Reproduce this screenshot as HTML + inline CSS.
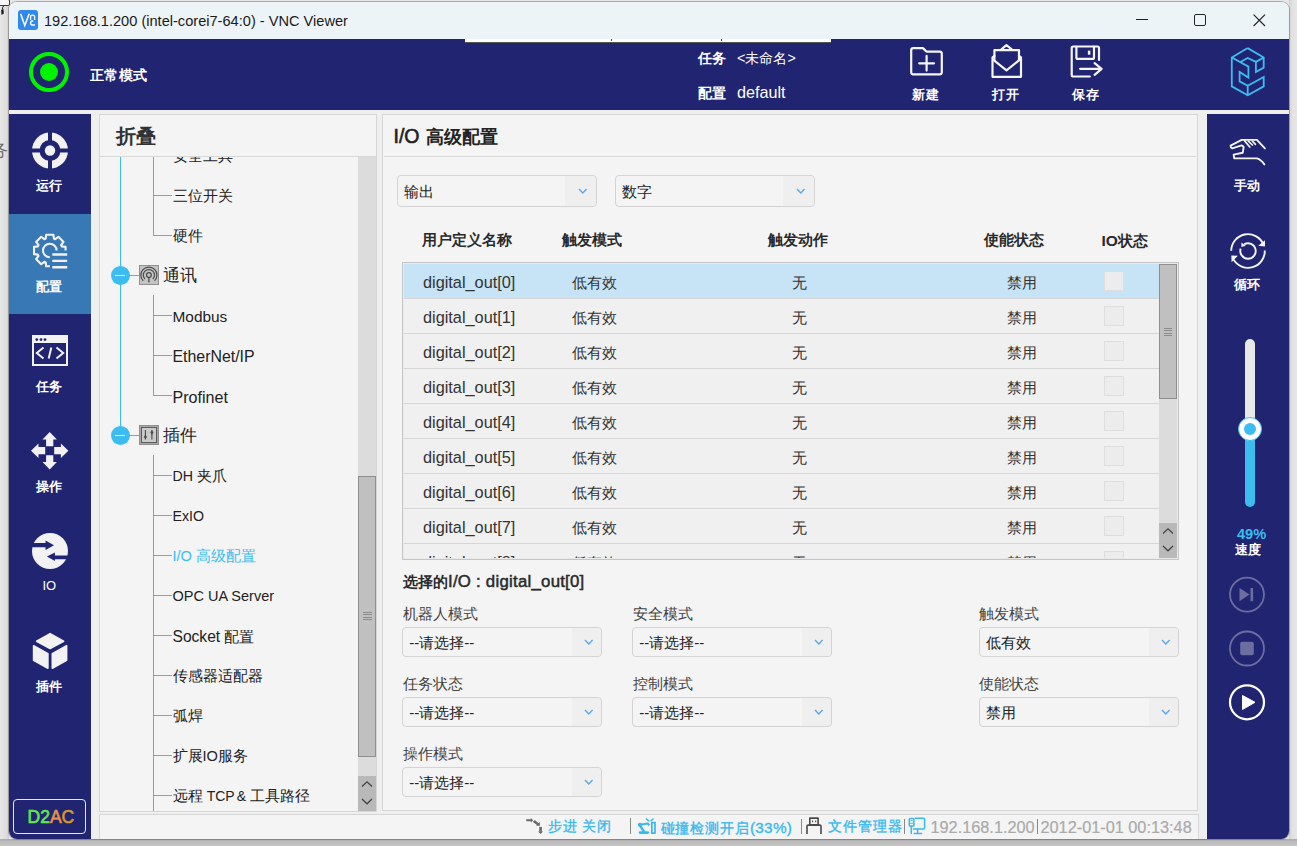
<!DOCTYPE html><html><head><meta charset="utf-8"><style>
*{box-sizing:border-box;margin:0;padding:0}
svg{display:block}
html,body{width:1297px;height:846px;overflow:hidden}
body{position:relative;background:#e6e6e6;font-family:"Liberation Sans",sans-serif;color:#333}
.a{position:absolute}
.t{position:absolute;white-space:nowrap;line-height:1}
.w{color:#fff;font-weight:bold}
.L{font-size:16.4px}
.panel{position:absolute;background:#f4f4f4;border:1px solid #d6d6d6}
.sel{position:absolute;border:1px solid #d3d3d3;border-radius:4px;background:#f4f4f4}
.sel .dd{position:absolute;right:0;top:0;bottom:0;width:30px;background:#efefef;border-radius:0 4px 4px 0}
.sel .dd svg{position:absolute;left:11px;top:12px}
.sel .tx{position:absolute;left:6.2px;top:7px;font-size:15px;line-height:15px;white-space:nowrap;color:#222}
.lbl{position:absolute;font-size:15px;line-height:15px;color:#444;white-space:nowrap}
</style></head><body>
<div class="a" style="left:1289px;top:0;width:8px;height:839px;background:linear-gradient(90deg,#cfcfcf,#e2e2e2 40%,#e6e6e6)"></div>
<div class="a" style="left:0;top:0;width:9px;height:846px;background:linear-gradient(90deg,#e6e6e6,#dedede 70%,#c9c9c9)"></div>
<div class="a" style="left:-3px;top:-1px;width:13px;height:7px;background:#f8f8f8;border:1.3px solid #3a3a3a;border-radius:0 2px 2px 0"></div>
<svg class="a" style="left:0;top:5px" width="9" height="12" viewBox="0 0 9 12"><path d="M3.8 0.8 Q2.4 2 2.4 4" fill="none" stroke="#222" stroke-width="1"/><path d="M1.2 5 L3.4 3.8 L3.8 8.4 L1.5 10 Z" fill="#1a1a1a"/></svg>
<div class="a" style="left:0;top:839px;width:1297px;height:7px;background:linear-gradient(#a9a9a9,#bdbdbd 40%,#c4c4c4)"></div>
<div class="t" style="left:-9px;top:142px;font-size:17px;color:#666">务</div>
<div class="a" style="left:9px;top:2px;width:1280px;height:837px;background:#efefef;border-radius:8px 8px 8px 8px;overflow:hidden;box-shadow:0 0 0 1px rgba(60,60,60,0.35)">
<div class="a" style="left:0;top:0;width:1280px;height:37px;background:#edf4f8"></div>
</div>
<div class="a" style="left:18px;top:10px;width:20px;height:20px;background:#3189ea;border-radius:3px"></div>
<svg class="a" style="left:18px;top:10px" width="20" height="20" viewBox="0 0 20 20"><path d="M2.6 3.8 L6.8 15.5 L11.2 3.8" fill="none" stroke="#fff" stroke-width="1.5" stroke-linejoin="miter"/><path d="M12.6 10 V6.6 Q12.6 5.2 14.6 5.2 Q16.6 5.2 16.6 6.6 V10" fill="none" stroke="#fff" stroke-width="1.3"/><path d="M17 15 H14.4 Q12.6 15 12.6 13 Q12.6 11 14.4 11 H15.2" fill="none" stroke="#fff" stroke-width="1.3"/></svg>
<div class="t" style="left:44px;top:14px;font-size:14.6px;color:#1a1a1a">192.168.1.200 (intel-corei7-64:0) - VNC Viewer</div>
<div class="a" style="left:1136px;top:19px;width:12px;height:1px;background:#222"></div>
<div class="a" style="left:1194px;top:14px;width:12px;height:12px;border:1.2px solid #222;border-radius:2px"></div>
<svg class="a" style="left:1253px;top:13.5px" width="13" height="13" viewBox="0 0 13 13"><path d="M0.6 0.6 L12 12 M12 0.6 L0.6 12" stroke="#222" stroke-width="1.15"/></svg>
<div class="a" style="left:9px;top:39px;width:1280px;height:71px;background:#212471"></div>
<div class="a" style="left:465px;top:39px;width:366px;height:4px;background:#fff;border-bottom:1px solid #555"></div>
<div class="a" style="left:611px;top:39px;width:1px;height:2px;background:#555"></div>
<div class="a" style="left:721px;top:39px;width:1px;height:2px;background:#555"></div>
<div class="a" style="left:29px;top:52px;width:40px;height:40px;border:4px solid #00f400;border-radius:50%"></div>
<div class="a" style="left:40px;top:63px;width:18px;height:18px;background:#00f400;border-radius:50%"></div>
<div class="t w" style="left:89.5px;top:67.5px;font-size:14.2px;letter-spacing:0.6px">正常模式</div>
<div class="t w" style="left:697.5px;top:50.5px;font-size:14px;letter-spacing:0.3px">任务</div>
<div class="t" style="left:737px;top:50.5px;font-size:14.4px;color:#fff">&lt;未命名&gt;</div>
<div class="t w" style="left:697.5px;top:85.5px;font-size:14px;letter-spacing:0.3px">配置</div>
<div class="t" style="left:737px;top:84px;font-size:16.2px;color:#fff">default</div>
<svg class="a" style="left:905px;top:43px" width="42" height="36" viewBox="0 0 42 36"><path d="M8.2 5.2 H17.6 Q18.1 5.2 18.5 5.6 L21.1 8.3 Q21.5 8.7 22 8.7 H34.8 Q36.8 8.7 36.8 10.7 V29.3 Q36.8 31.3 34.8 31.3 H8.2 Q6.2 31.3 6.2 29.3 V7.2 Q6.2 5.2 8.2 5.2 Z" fill="none" stroke="#f6f6f6" stroke-width="2.2" stroke-linejoin="round" stroke-linecap="round"/><path d="M21.6 12.9 V27.6 M14.2 20.3 H29" fill="none" stroke="#f6f6f6" stroke-width="2.2" stroke-linejoin="round" stroke-linecap="round"/></svg>
<svg class="a" style="left:985px;top:43px" width="42" height="36" viewBox="0 0 42 36"><path d="M9.4 17 V7.2 H34 V17" fill="none" stroke="#f6f6f6" stroke-width="2.2" stroke-linejoin="round" stroke-linecap="round"/><path d="M16.4 6.4 L21.4 2.2 L26.8 6.4" fill="none" stroke="#f6f6f6" stroke-width="2.2" stroke-linejoin="round" stroke-linecap="round"/><path d="M9.4 13 L7.5 14.4 V33.8 H36 V14.4 L34 13" fill="none" stroke="#f6f6f6" stroke-width="2.2" stroke-linejoin="round" stroke-linecap="round"/><path d="M8.7 17.1 L21.5 27.3 L34.3 17.1" fill="none" stroke="#f6f6f6" stroke-width="2.2" stroke-linejoin="round" stroke-linecap="round"/></svg>
<svg class="a" style="left:1065px;top:43px" width="42" height="36" viewBox="0 0 42 36"><path d="M24.8 33.5 H8.2 Q6.7 33.5 6.7 32 V5 Q6.7 3.5 8.2 3.5 H32.5 Q34 3.5 34 5 V16.9" fill="none" stroke="#f6f6f6" stroke-width="2.2" stroke-linejoin="round" stroke-linecap="round"/><path d="M11.4 3.8 V14.4 Q11.4 15.9 12.9 15.9 H27.5 Q29 15.9 29 14.4 V3.8" fill="none" stroke="#f6f6f6" stroke-width="2.2" stroke-linejoin="round" stroke-linecap="round"/><path d="M24.1 7.6 V11.7" fill="none" stroke="#f6f6f6" stroke-width="2.5"/><path d="M15.1 25.8 H36.6 M29.6 20.1 L36.6 25.8 L29.6 31.8" fill="none" stroke="#f6f6f6" stroke-width="2.2" stroke-linejoin="round" stroke-linecap="round"/></svg>
<div class="t w" style="left:912px;top:88px;font-size:13px;letter-spacing:0.8px">新建</div>
<div class="t w" style="left:992px;top:88px;font-size:13px;letter-spacing:0.8px">打开</div>
<div class="t w" style="left:1072px;top:88px;font-size:13px;letter-spacing:0.8px">保存</div>
<svg class="a" style="left:1228px;top:45px" width="40" height="54" viewBox="0 0 40 54"><path d="M19.7 3.1 L35.7 12.5 L35.7 22.6 L27.9 27.0 L27.9 16.9 L35.7 12.5 M27.9 16.9 L19.7 12.9 L11.9 17.2 M3.8 12.5 L20.4 21.6 L20.4 32.6 L11.6 27.0 L11.6 36.4 L19.7 40.8 L35.7 32.0 L35.7 41.4 L19.7 50.2 L3.8 41.4 L3.8 12.5 L19.7 3.1 M19.7 40.8 L19.7 50.2" fill="none" stroke="#3bbdef" stroke-width="1.8" stroke-linejoin="miter"/></svg>
<div class="a" style="left:9px;top:114px;width:82px;height:725px;background:#212471;border-radius:0 0 0 8px"></div>
<div class="a" style="left:9px;top:214px;width:82px;height:100px;background:#3778b5"></div>
<svg class="a" style="left:30px;top:130px" width="40" height="41" viewBox="0 0 40 41">
<defs><mask id="m1"><rect width="40" height="41" fill="#fff"/><rect x="18" y="0" width="4" height="41" fill="#000"/><rect x="0" y="18.5" width="40" height="4" fill="#000"/><circle cx="20" cy="20.5" r="10.5" fill="#000"/></mask></defs>
<circle cx="20" cy="20.5" r="18" fill="#f2f2f2" mask="url(#m1)"/><circle cx="20" cy="20.5" r="5.2" fill="#f2f2f2"/></svg>
<div class="t w" style="left:36px;top:179px;font-size:13px;letter-spacing:0.4px">运行</div>
<svg class="a" style="left:32px;top:233px" width="37" height="37" viewBox="0 0 37 37">
<defs><clipPath id="gc"><path d="M0 0 H37 V17.5 H17.8 V37 H0 Z"/></clipPath></defs>
<g clip-path="url(#gc)"><path d="M13.70 5.59 L14.16 1.72 L21.44 1.72 L21.90 5.59 L23.32 6.18 L26.38 3.76 L31.54 8.92 L29.12 11.98 L29.71 13.40 L33.58 13.86 L33.58 21.14 L29.71 21.60 L29.12 23.02 L31.54 26.08 L26.38 31.24 L23.32 28.82 L21.90 29.41 L21.44 33.28 L14.16 33.28 L13.70 29.41 L12.28 28.82 L9.22 31.24 L4.06 26.08 L6.48 23.02 L5.89 21.60 L2.02 21.14 L2.02 13.86 L5.89 13.40 L6.48 11.98 L4.06 8.92 L9.22 3.76 L12.28 6.18 Z" fill="none" stroke="#f2f2f2" stroke-width="2.1" stroke-linejoin="round"/>
<circle cx="17.8" cy="17.5" r="6.8" fill="none" stroke="#f2f2f2" stroke-width="2.1"/></g>
<path d="M20.3 21.5 H35.2 M20.3 27.9 H35.2 M20.3 34.2 H35.2" stroke="#f2f2f2" stroke-width="2.4"/></svg>
<div class="t w" style="left:36px;top:280px;font-size:13px;letter-spacing:0.4px">配置</div>
<svg class="a" style="left:32px;top:335px" width="37" height="32" viewBox="0 0 37 32">
<rect x="1" y="1" width="34" height="29" fill="none" stroke="#f2f2f2" stroke-width="2"/><rect x="1" y="1" width="34" height="7" fill="#f2f2f2"/>
<circle cx="4.8" cy="4.6" r="1.4" fill="#212471"/><circle cx="9" cy="4.6" r="1.4" fill="#212471"/><circle cx="13" cy="4.6" r="1.4" fill="#212471"/>
<path d="M11.5 12.5 L4.8 18 L11.5 23.5 M24.5 12.5 L31.2 18 L24.5 23.5 M19.3 12.5 L16.7 23.5" fill="none" stroke="#f2f2f2" stroke-width="2"/></svg>
<div class="t w" style="left:36px;top:380px;font-size:13px;letter-spacing:0.4px">任务</div>
<svg class="a" style="left:31.3px;top:432.3px" width="37.4" height="37.4" viewBox="0 0 37.4 37.4"><path transform="rotate(0 18.7 18.7)" d="M18.7 0 L25.9 7.5 H22.3 V14.2 H15.1 V7.5 H11.5 Z" fill="#f2f2f2"/><path transform="rotate(90 18.7 18.7)" d="M18.7 0 L25.9 7.5 H22.3 V14.2 H15.1 V7.5 H11.5 Z" fill="#f2f2f2"/><path transform="rotate(180 18.7 18.7)" d="M18.7 0 L25.9 7.5 H22.3 V14.2 H15.1 V7.5 H11.5 Z" fill="#f2f2f2"/><path transform="rotate(270 18.7 18.7)" d="M18.7 0 L25.9 7.5 H22.3 V14.2 H15.1 V7.5 H11.5 Z" fill="#f2f2f2"/></svg>
<div class="t w" style="left:36px;top:480px;font-size:13px;letter-spacing:0.4px">操作</div>
<svg class="a" style="left:32px;top:533px" width="36" height="36" viewBox="0 0 36 36">
<defs><mask id="m2"><rect width="36" height="36" fill="#fff"/>
<path d="M0 10 H13.5 V7.6 L22 12.3 L13.5 17 V14.2 H0 Z" fill="#000"/>
<path d="M36 22.4 H22.9 V19.5 L14.9 23.5 L22.9 28 V26.2 H36 Z" fill="#000"/></mask></defs>
<circle cx="18" cy="18" r="18" fill="#f2f2f2" mask="url(#m2)"/></svg>
<div class="t" style="left:42.5px;top:579px;font-size:13px;color:#fff">IO</div>
<svg class="a" style="left:31px;top:632px" width="38" height="38" viewBox="0 0 38 38">
<g fill="#f2f2f2" stroke="#f2f2f2" stroke-width="1.6" stroke-linejoin="round">
<path d="M19.1 1.6 L32.6 9.3 L19.1 16.5 L5.6 9.3 Z"/>
<path d="M2.6 13.7 L16.9 21.8 V36.2 L2.6 28.3 Z"/>
<path d="M21.3 21.8 L35.6 13.7 V28.3 L21.3 36.2 Z"/></g></svg>
<div class="t w" style="left:36px;top:680px;font-size:13px;letter-spacing:0.4px">插件</div>
<div class="a" style="left:13px;top:799px;width:73px;height:35px;border:1px solid #e8e8e8;border-radius:4px"></div>
<div class="t" style="left:27.5px;top:809px;font-size:17.5px;font-weight:normal;-webkit-text-stroke:0.6px currentColor;letter-spacing:0px"><span style="color:#62e84a">D2</span><span style="color:#e6924c">A</span><span style="color:#d99a1e">C</span></div>
<div class="a" style="left:1207px;top:114px;width:82px;height:725px;background:#212471;border-radius:0 0 8px 0"></div>
<svg class="a" style="left:1226px;top:136px" width="44" height="34" viewBox="0 0 44 34">
<path d="M38.4 28.5 Q35 23.5 30.9 22.4 H8.2 Q7.7 19.8 7.7 18.6 L16.7 16.7 Q17.6 12 17.6 11 Q16.6 9.1 14.8 9.6 L6.3 12.4 Q4.4 11.6 4.6 9.6 L15.7 3.9 H30.9 L38.9 12.4" fill="none" stroke="#f4f4f4" stroke-width="1.9" stroke-linecap="round" stroke-linejoin="round"/>
<path d="M18.6 4.9 L23.8 11 M22.3 5.2 L26.4 9 M26.4 5.2 L29.4 8.3" stroke="#f4f4f4" stroke-width="1.7" stroke-linecap="round"/></svg>
<div class="t w" style="left:1234px;top:179px;font-size:13px;letter-spacing:0.4px">手动</div>
<svg class="a" style="left:1228px;top:231px" width="40" height="40" viewBox="0 0 40 40">
<g fill="none" stroke="#f4f4f4" stroke-width="1.9">
<path d="M3.20 19.71 A16.8 16.8 0 0 1 35.35 13.17"/>
<path d="M36.79 19.41 A16.8 16.8 0 0 1 5.45 28.40"/>
<path d="M16.15 13.33 A7.7 7.7 0 1 1 12.68 17.62"/></g>
<path d="M30.2 14.8 L37 9.2 L37 15.4 Z" fill="#f4f4f4"/><path d="M3.3 24.5 L9.9 24.7 L3.6 31.2 Z" fill="#f4f4f4"/><path d="M13.4 11.4 L13.4 15.9 L17.8 14.8 Z" fill="#f4f4f4"/></svg>
<div class="t w" style="left:1234px;top:278px;font-size:13px;letter-spacing:0.4px">循环</div>
<div class="a" style="left:1245px;top:339px;width:10px;height:92px;background:#e8e8e8;border-radius:5px 5px 0 0"></div>
<div class="a" style="left:1245px;top:425px;width:10px;height:82px;background:#3bbdef;border-radius:0 0 5px 5px"></div>
<div class="a" style="left:1238px;top:416.5px;width:24px;height:24px;background:#fff;border:1px solid #3bbdef;border-radius:50%"></div>
<div class="a" style="left:1244px;top:422.5px;width:12px;height:12px;background:#3bbdef;border-radius:50%"></div>
<div class="t" style="left:1237px;top:527px;font-size:14.6px;font-weight:bold;color:#3bbdef">49%</div>
<div class="t w" style="left:1234.5px;top:543px;font-size:13px;letter-spacing:0.6px">速度</div>
<svg class="a" style="left:1228px;top:576px" width="38" height="38" viewBox="0 0 38 38"><circle cx="19" cy="18.6" r="17" fill="none" stroke="#6c6e9f" stroke-width="1.8"/>
<path d="M11.5 12 L21.5 18.6 L11.5 25.2 Z" fill="#6c6e9f"/><rect x="22.5" y="12" width="2.6" height="13.2" fill="#6c6e9f"/></svg>
<svg class="a" style="left:1228px;top:630px" width="38" height="38" viewBox="0 0 38 38"><circle cx="19" cy="18.5" r="17" fill="none" stroke="#6c6e9f" stroke-width="1.8"/>
<rect x="12.2" y="11.7" width="13.6" height="13.6" rx="2" fill="#6c6e9f"/></svg>
<svg class="a" style="left:1228px;top:684px" width="38" height="38" viewBox="0 0 38 38"><circle cx="19" cy="18.3" r="17" fill="none" stroke="#fff" stroke-width="2.2"/>
<path d="M14.5 11.5 L27 18.3 L14.5 25.5 Z" fill="#fff" stroke="#fff" stroke-width="1" stroke-linejoin="round"/></svg>
<div class="panel" style="left:99px;top:114px;width:278px;height:698px"></div>
<div class="a" style="left:100px;top:156px;width:276px;height:1px;background:#d8d8d8"></div>
<div class="t" style="left:115.5px;top:126px;font-size:20px;font-weight:bold;color:#333">折叠</div>
<div class="a" style="left:100px;top:157px;width:258px;height:654px;overflow:hidden">
<div class="a" style="left:20px;top:0;width:1px;height:278px;background:#3bbdef"></div>
<div class="a" style="left:53px;top:-20px;width:1px;height:99px;background:#3bbdef"></div>
<div class="a" style="left:53px;top:-2px;width:19px;height:1px;background:#3bbdef"></div>
<div class="t" style="left:72.5px;top:-8.3px;font-size:14.8px;color:#222">安全工具</div>
<div class="a" style="left:53px;top:38px;width:19px;height:1px;background:#3bbdef"></div>
<div class="t" style="left:72.5px;top:31.7px;font-size:14.8px;color:#222">三位开关</div>
<div class="a" style="left:53px;top:78px;width:19px;height:1px;background:#3bbdef"></div>
<div class="t" style="left:72.5px;top:71.7px;font-size:14.8px;color:#222">硬件</div>
<div class="a" style="left:10.700000000000003px;top:108.8px;width:19px;height:19px;border-radius:50%;background:#3bbdef"></div>
<div class="a" style="left:15px;top:118px;width:10px;height:1px;background:#fff"></div>
<div class="a" style="left:29px;top:118px;width:10px;height:1px;background:#3bbdef"></div>
<div class="t" style="left:62.5px;top:110.5px;font-size:16.8px;color:#222">通讯</div>
<div class="a" style="left:53px;top:138px;width:1px;height:101px;background:#3bbdef"></div>
<div class="a" style="left:53px;top:158px;width:19px;height:1px;background:#3bbdef"></div>
<div class="t" style="left:72.5px;top:151.7px;font-size:14.8px;color:#222"><span style="font-size:15.4px;">Modbus</span></div>
<div class="a" style="left:53px;top:198px;width:19px;height:1px;background:#3bbdef"></div>
<div class="t" style="left:72.5px;top:191.7px;font-size:14.8px;color:#222"><span style="font-size:15.9px;">EtherNet/IP</span></div>
<div class="a" style="left:53px;top:238px;width:19px;height:1px;background:#3bbdef"></div>
<div class="t" style="left:72.5px;top:231.7px;font-size:14.8px;color:#222"><span style="font-size:16.1px;">Profinet</span></div>
<div class="a" style="left:10.700000000000003px;top:268.8px;width:19px;height:19px;border-radius:50%;background:#3bbdef"></div>
<div class="a" style="left:15px;top:278px;width:10px;height:1px;background:#fff"></div>
<div class="a" style="left:29px;top:278px;width:10px;height:1px;background:#3bbdef"></div>
<div class="t" style="left:62.5px;top:270.5px;font-size:16.8px;color:#222">插件</div>
<div class="a" style="left:53px;top:298px;width:1px;height:700px;background:#3bbdef"></div>
<div class="a" style="left:53px;top:318px;width:19px;height:1px;background:#3bbdef"></div>
<div class="t" style="left:72.5px;top:311.7px;font-size:14.8px;color:#222"><span style="font-size:14.2px;">DH</span> 夹爪</div>
<div class="a" style="left:53px;top:358px;width:19px;height:1px;background:#3bbdef"></div>
<div class="t" style="left:72.5px;top:351.7px;font-size:14.8px;color:#222"><span style="font-size:14.2px;">ExIO</span></div>
<div class="a" style="left:53px;top:398px;width:19px;height:1px;background:#3bbdef"></div>
<div class="t" style="left:72.5px;top:391.7px;font-size:14.8px;color:#3bbdef"><span style="font-size:14.6px;">I/O</span> 高级配置</div>
<div class="a" style="left:53px;top:438px;width:19px;height:1px;background:#3bbdef"></div>
<div class="t" style="left:72.5px;top:431.7px;font-size:14.8px;color:#222"><span style="font-size:14.5px;">OPC UA Server</span></div>
<div class="a" style="left:53px;top:478px;width:19px;height:1px;background:#3bbdef"></div>
<div class="t" style="left:72.5px;top:471.7px;font-size:14.8px;color:#222"><span style="font-size:15.6px;">Socket</span> 配置</div>
<div class="a" style="left:53px;top:518px;width:19px;height:1px;background:#3bbdef"></div>
<div class="t" style="left:72.5px;top:511.7px;font-size:14.8px;color:#222">传感器适配器</div>
<div class="a" style="left:53px;top:558px;width:19px;height:1px;background:#3bbdef"></div>
<div class="t" style="left:72.5px;top:551.7px;font-size:14.8px;color:#222">弧焊</div>
<div class="a" style="left:53px;top:598px;width:19px;height:1px;background:#3bbdef"></div>
<div class="t" style="left:72.5px;top:591.7px;font-size:14.8px;color:#222">扩展<span style="font-size:14.6px;">IO</span>服务</div>
<div class="a" style="left:53px;top:638px;width:19px;height:1px;background:#3bbdef"></div>
<div class="t" style="left:72.5px;top:631.7px;font-size:14.8px;color:#222">远程 <span style="font-size:14.0px;word-spacing:-1.6px;">TCP &amp;</span> 工具路径</div>
<svg class="a" style="left:39px;top:108px" width="20" height="20" viewBox="0 0 20 20"><rect x="0.5" y="0.5" width="19" height="19" fill="#c4c4c4" stroke="#909090"/>
<g fill="none" stroke="#4a4a4a" stroke-width="1.25"><circle cx="9.9" cy="10.1" r="2.4"/><path d="M5.94 14.06 A5.6 5.6 0 1 1 13.86 14.06"/><path d="M4.17 15.83 A8.1 8.1 0 1 1 15.63 15.83"/><path d="M9.9 12.4 V17.6"/></g></svg>
<svg class="a" style="left:39px;top:268px" width="20" height="20" viewBox="0 0 20 20"><rect x="0.5" y="0.5" width="19" height="19" fill="#a8a8a8" stroke="#909090"/>
<rect x="2.5" y="2.5" width="15" height="15" fill="#cacaca" stroke="#5a5a5a"/>
<path d="M6.4 5 V14.5 M12.9 5 V14.5" stroke="#4a4a4a" stroke-width="1.1"/><path d="M6.4 9.8 L8 11.9 L6.4 14 L4.8 11.9 Z" fill="#4a4a4a"/><path d="M12.9 5.5 L14.5 7.6 L12.9 9.7 L11.3 7.6 Z" fill="#4a4a4a"/></svg>
</div>
<div class="a" style="left:358px;top:157px;width:18px;height:619px;background:#dcdcdc"></div>
<div class="a" style="left:358px;top:476px;width:18px;height:281px;background:#c0c0c0;border:1px solid #8f8f8f"></div>
<div class="a" style="left:362.5px;top:612px;width:9px;height:9px;background:repeating-linear-gradient(#8c8c8c 0 1px,transparent 1px 2.3px)"></div>
<div class="a" style="left:358px;top:776px;width:18px;height:35px;background:#b9b9b9"></div>
<svg class="a" style="left:358px;top:776px" width="18" height="35" viewBox="0 0 18 35"><path d="M4 10.5 L9 5.8 L14 10.5 M4 23 L9 27.8 L14 23" fill="none" stroke="#404040" stroke-width="1.2"/></svg>
<div class="panel" style="left:382px;top:114px;width:816px;height:697px"></div>
<div class="a" style="left:384px;top:156px;width:812px;height:1px;background:#d8d8d8"></div>
<div class="t" style="left:393.5px;top:126.5px;font-size:18.4px;font-weight:bold;color:#222"><span style="font-size:19.5px;font-weight:normal;-webkit-text-stroke:0.6px #222">I/O</span><span style="margin-left:6px;font-size:18.4px">高级配置</span></div>
<div class="sel" style="left:397px;top:175px;width:200px;height:32px"><div class="dd" style="width:31px"></div><div class="a" style="left:180.0px;top:12.3px"><svg width="9.6" height="6" viewBox="0 0 9.6 6"><path d="M1 1 L4.8 5 L8.6 1" fill="none" stroke="#5aa8f0" stroke-width="1.4"/></svg></div><div class="tx" style="top:7.5px">输出</div></div>
<div class="sel" style="left:615px;top:175px;width:200px;height:32px"><div class="dd" style="width:31px"></div><div class="a" style="left:180.0px;top:12.3px"><svg width="9.6" height="6" viewBox="0 0 9.6 6"><path d="M1 1 L4.8 5 L8.6 1" fill="none" stroke="#5aa8f0" stroke-width="1.4"/></svg></div><div class="tx" style="top:7.5px">数字</div></div>
<div class="t" style="left:422px;top:232.5px;font-size:14.5px;font-weight:bold;letter-spacing:0px;color:#2a2a2a">用户定义名称</div>
<div class="t" style="left:562px;top:232.5px;font-size:14.5px;font-weight:bold;letter-spacing:0px;color:#2a2a2a">触发模式</div>
<div class="t" style="left:767.5px;top:232.5px;font-size:14.5px;font-weight:bold;letter-spacing:0px;color:#2a2a2a">触发动作</div>
<div class="t" style="left:983.5px;top:232.5px;font-size:14.5px;font-weight:bold;letter-spacing:0px;color:#2a2a2a">使能状态</div>
<div class="t" style="left:1101.5px;top:232.5px;font-size:14.5px;font-weight:bold;letter-spacing:0px;color:#2a2a2a"><span style='font-size:15.5px'>IO</span>状态</div>
<div class="a" style="left:402px;top:262px;width:777px;height:298px;border:1px solid #c6c6c6;background:#e9e9e9"></div>
<div class="a" style="left:404px;top:264px;width:773px;height:294px;background:#f0f0f0;overflow:hidden">
<div class="a" style="left:0;top:0px;width:755px;height:35px;background:#c6e4f6;border-bottom:1px solid #d6d6d6"></div>
<div class="t" style="left:19px;top:10px;font-size:16.3px;color:#333">digital_out[0]</div>
<div class="t" style="left:167.5px;top:11px;font-size:15px;color:#333">低有效</div>
<div class="t" style="left:388px;top:10.5px;font-size:15px;color:#333">无</div>
<div class="t" style="left:603px;top:11px;font-size:15px;color:#333">禁用</div>
<div class="a" style="left:700px;top:7px;width:20px;height:20px;background:#ececec;border:1px solid #dedede"></div>
<div class="a" style="left:0;top:35px;width:755px;height:35px;background:#f0f0f0;border-bottom:1px solid #d6d6d6"></div>
<div class="t" style="left:19px;top:45px;font-size:16.3px;color:#333">digital_out[1]</div>
<div class="t" style="left:167.5px;top:46px;font-size:15px;color:#333">低有效</div>
<div class="t" style="left:388px;top:45.5px;font-size:15px;color:#333">无</div>
<div class="t" style="left:603px;top:46px;font-size:15px;color:#333">禁用</div>
<div class="a" style="left:700px;top:42px;width:20px;height:20px;background:#ececec;border:1px solid #dedede"></div>
<div class="a" style="left:0;top:70px;width:755px;height:35px;background:#f0f0f0;border-bottom:1px solid #d6d6d6"></div>
<div class="t" style="left:19px;top:80px;font-size:16.3px;color:#333">digital_out[2]</div>
<div class="t" style="left:167.5px;top:81px;font-size:15px;color:#333">低有效</div>
<div class="t" style="left:388px;top:80.5px;font-size:15px;color:#333">无</div>
<div class="t" style="left:603px;top:81px;font-size:15px;color:#333">禁用</div>
<div class="a" style="left:700px;top:77px;width:20px;height:20px;background:#ececec;border:1px solid #dedede"></div>
<div class="a" style="left:0;top:105px;width:755px;height:35px;background:#f0f0f0;border-bottom:1px solid #d6d6d6"></div>
<div class="t" style="left:19px;top:115px;font-size:16.3px;color:#333">digital_out[3]</div>
<div class="t" style="left:167.5px;top:116px;font-size:15px;color:#333">低有效</div>
<div class="t" style="left:388px;top:115.5px;font-size:15px;color:#333">无</div>
<div class="t" style="left:603px;top:116px;font-size:15px;color:#333">禁用</div>
<div class="a" style="left:700px;top:112px;width:20px;height:20px;background:#ececec;border:1px solid #dedede"></div>
<div class="a" style="left:0;top:140px;width:755px;height:35px;background:#f0f0f0;border-bottom:1px solid #d6d6d6"></div>
<div class="t" style="left:19px;top:150px;font-size:16.3px;color:#333">digital_out[4]</div>
<div class="t" style="left:167.5px;top:151px;font-size:15px;color:#333">低有效</div>
<div class="t" style="left:388px;top:150.5px;font-size:15px;color:#333">无</div>
<div class="t" style="left:603px;top:151px;font-size:15px;color:#333">禁用</div>
<div class="a" style="left:700px;top:147px;width:20px;height:20px;background:#ececec;border:1px solid #dedede"></div>
<div class="a" style="left:0;top:175px;width:755px;height:35px;background:#f0f0f0;border-bottom:1px solid #d6d6d6"></div>
<div class="t" style="left:19px;top:185px;font-size:16.3px;color:#333">digital_out[5]</div>
<div class="t" style="left:167.5px;top:186px;font-size:15px;color:#333">低有效</div>
<div class="t" style="left:388px;top:185.5px;font-size:15px;color:#333">无</div>
<div class="t" style="left:603px;top:186px;font-size:15px;color:#333">禁用</div>
<div class="a" style="left:700px;top:182px;width:20px;height:20px;background:#ececec;border:1px solid #dedede"></div>
<div class="a" style="left:0;top:210px;width:755px;height:35px;background:#f0f0f0;border-bottom:1px solid #d6d6d6"></div>
<div class="t" style="left:19px;top:220px;font-size:16.3px;color:#333">digital_out[6]</div>
<div class="t" style="left:167.5px;top:221px;font-size:15px;color:#333">低有效</div>
<div class="t" style="left:388px;top:220.5px;font-size:15px;color:#333">无</div>
<div class="t" style="left:603px;top:221px;font-size:15px;color:#333">禁用</div>
<div class="a" style="left:700px;top:217px;width:20px;height:20px;background:#ececec;border:1px solid #dedede"></div>
<div class="a" style="left:0;top:245px;width:755px;height:35px;background:#f0f0f0;border-bottom:1px solid #d6d6d6"></div>
<div class="t" style="left:19px;top:255px;font-size:16.3px;color:#333">digital_out[7]</div>
<div class="t" style="left:167.5px;top:256px;font-size:15px;color:#333">低有效</div>
<div class="t" style="left:388px;top:255.5px;font-size:15px;color:#333">无</div>
<div class="t" style="left:603px;top:256px;font-size:15px;color:#333">禁用</div>
<div class="a" style="left:700px;top:252px;width:20px;height:20px;background:#ececec;border:1px solid #dedede"></div>
<div class="a" style="left:0;top:280px;width:755px;height:35px;background:#f0f0f0;border-bottom:1px solid #d6d6d6"></div>
<div class="t" style="left:19px;top:290px;font-size:16.3px;color:#333">digital_out[8]</div>
<div class="t" style="left:167.5px;top:291px;font-size:15px;color:#333">低有效</div>
<div class="t" style="left:388px;top:290.5px;font-size:15px;color:#333">无</div>
<div class="t" style="left:603px;top:291px;font-size:15px;color:#333">禁用</div>
<div class="a" style="left:700px;top:287px;width:20px;height:20px;background:#ececec;border:1px solid #dedede"></div>
<div class="a" style="left:755px;top:0;width:18px;height:294px;background:#dcdcdc"></div>
<div class="a" style="left:755px;top:0;width:18px;height:135px;background:#c0c0c0;border:1px solid #8f8f8f"></div>
<div class="a" style="left:760px;top:64px;width:8px;height:8px;background:repeating-linear-gradient(#8c8c8c 0 1px,transparent 1px 2.3px)"></div>
<div class="a" style="left:755px;top:259px;width:18px;height:35px;background:#b9b9b9"></div>
<svg class="a" style="left:755px;top:259px" width="18" height="35" viewBox="0 0 18 35"><path d="M4 10.5 L9 5.8 L14 10.5 M4 23 L9 27.8 L14 23" fill="none" stroke="#404040" stroke-width="1.2"/></svg>
</div>
<div class="t" style="left:402.5px;top:574px;font-size:14.6px;font-weight:bold;color:#2a2a2a">选择的<span style="font-size:16.8px;letter-spacing:0.25px;font-weight:normal;-webkit-text-stroke:0.5px #2a2a2a;margin-left:0.5px">I/O : digital_out[0]</span></div>
<div class="lbl" style="left:402.5px;top:606px">机器人模式</div>
<div class="lbl" style="left:632.5px;top:606px">安全模式</div>
<div class="lbl" style="left:979px;top:606px">触发模式</div>
<div class="lbl" style="left:402.5px;top:676px">任务状态</div>
<div class="lbl" style="left:632.5px;top:676px">控制模式</div>
<div class="lbl" style="left:979px;top:676px">使能状态</div>
<div class="lbl" style="left:402.5px;top:746px">操作模式</div>
<div class="sel" style="left:402px;top:627px;width:200px;height:30px"><div class="dd" style="width:29px"></div><div class="a" style="left:181.0px;top:11.3px"><svg width="9.6" height="6" viewBox="0 0 9.6 6"><path d="M1 1 L4.8 5 L8.6 1" fill="none" stroke="#5aa8f0" stroke-width="1.4"/></svg></div><div class="tx" style="top:6.5px">--请选择--</div></div>
<div class="sel" style="left:632px;top:627px;width:200px;height:30px"><div class="dd" style="width:29px"></div><div class="a" style="left:181.0px;top:11.3px"><svg width="9.6" height="6" viewBox="0 0 9.6 6"><path d="M1 1 L4.8 5 L8.6 1" fill="none" stroke="#5aa8f0" stroke-width="1.4"/></svg></div><div class="tx" style="top:6.5px">--请选择--</div></div>
<div class="sel" style="left:979px;top:627px;width:200px;height:30px"><div class="dd" style="width:29px"></div><div class="a" style="left:181.0px;top:11.3px"><svg width="9.6" height="6" viewBox="0 0 9.6 6"><path d="M1 1 L4.8 5 L8.6 1" fill="none" stroke="#5aa8f0" stroke-width="1.4"/></svg></div><div class="tx" style="top:6.5px">低有效</div></div>
<div class="sel" style="left:402px;top:697px;width:200px;height:30px"><div class="dd" style="width:29px"></div><div class="a" style="left:181.0px;top:11.3px"><svg width="9.6" height="6" viewBox="0 0 9.6 6"><path d="M1 1 L4.8 5 L8.6 1" fill="none" stroke="#5aa8f0" stroke-width="1.4"/></svg></div><div class="tx" style="top:6.5px">--请选择--</div></div>
<div class="sel" style="left:632px;top:697px;width:200px;height:30px"><div class="dd" style="width:29px"></div><div class="a" style="left:181.0px;top:11.3px"><svg width="9.6" height="6" viewBox="0 0 9.6 6"><path d="M1 1 L4.8 5 L8.6 1" fill="none" stroke="#5aa8f0" stroke-width="1.4"/></svg></div><div class="tx" style="top:6.5px">--请选择--</div></div>
<div class="sel" style="left:979px;top:697px;width:200px;height:30px"><div class="dd" style="width:29px"></div><div class="a" style="left:181.0px;top:11.3px"><svg width="9.6" height="6" viewBox="0 0 9.6 6"><path d="M1 1 L4.8 5 L8.6 1" fill="none" stroke="#5aa8f0" stroke-width="1.4"/></svg></div><div class="tx" style="top:6.5px">禁用</div></div>
<div class="sel" style="left:402px;top:767px;width:200px;height:30px"><div class="dd" style="width:29px"></div><div class="a" style="left:181.0px;top:11.3px"><svg width="9.6" height="6" viewBox="0 0 9.6 6"><path d="M1 1 L4.8 5 L8.6 1" fill="none" stroke="#5aa8f0" stroke-width="1.4"/></svg></div><div class="tx" style="top:6.5px">--请选择--</div></div>
<div class="a" style="left:99px;top:814px;width:1100px;height:25px;background:#f4f4f4;border:1px solid #d6d6d6;border-bottom:none"></div>
<svg class="a" style="left:520px;top:812px" width="28" height="26" viewBox="0 0 28 26">
<path d="M6.3 7.3 H10.8 V6 L13.2 8.3 L10.8 10.6 V9.3 H6.3 Z" fill="#6a6a6a"/>
<path d="M13.8 9.1 L17.3 12.2 L18.3 11.2 L19.9 13.6 L19.9 13.6 L16.2 13.6 L17.2 12.9 L13.0 9.9 Z" fill="#6a6a6a"/>
<path d="M14 8.9 L18.6 12.6" stroke="#6a6a6a" stroke-width="2.2"/>
<path d="M16.2 13.6 H19.9 V9.9 Z" fill="#6a6a6a"/>
<rect x="19.2" y="14.9" width="2.7" height="4.8" fill="#6a6a6a"/>
<path d="M18 19.5 H23.1 L20.55 22 Z" fill="#6a6a6a"/></svg>
<div class="t" style="left:548px;top:820px;font-size:13.6px;font-weight:500;letter-spacing:0.9px;color:#38b8ee;-webkit-text-stroke:0.35px #38b8ee">步进 关闭</div>
<div class="a" style="left:630px;top:818px;width:1px;height:16px;background:#888"></div>
<svg class="a" style="left:632px;top:812px" width="26" height="26" viewBox="0 0 26 26">
<g stroke="#38b8ee" fill="none" stroke-linecap="round">
<path d="M8 20.6 H15.8" stroke-width="2.6"/>
<path d="M7.6 12.8 L12.2 20" stroke-width="2.4"/>
<path d="M7.6 12.6 Q11 12.4 15.6 11.6" stroke-width="2"/>
<circle cx="7.9" cy="12.8" r="1.4" stroke-width="1.2"/>
<path d="M14.3 7 L16.7 8.8 M21 7 L19 8.8" stroke-width="1.5"/>
<rect x="19.8" y="10.6" width="3.2" height="10.5" stroke-width="1.7"/>
</g><path d="M16.6 10.2 L17.2 11.8 L18.6 12.4 L17.2 13 L16.6 14.6 L16 13 L14.6 12.4 L16 11.8 Z" fill="#38b8ee"/></svg>
<div class="t" style="left:660.5px;top:820px;font-size:13.6px;font-weight:500;letter-spacing:0.9px;color:#38b8ee;-webkit-text-stroke:0.35px #38b8ee">碰撞检测开启<span style='font-size:15.3px;letter-spacing:0.3px'>(33%)</span></div>
<div class="a" style="left:801px;top:819px;width:1px;height:15px;background:#888"></div>
<svg class="a" style="left:800px;top:812px" width="30" height="26" viewBox="0 0 30 26">
<g fill="none" stroke="#4a4a4a" stroke-width="1.6" stroke-linejoin="round"><path d="M9.8 6.1 H18.1 V12.9 H9.8 Z"/><path d="M7 22 V14.2 Q7 13.1 8.1 13.1 H19.9 Q21 13.1 21 14.2 V22"/></g>
<rect x="12" y="8.5" width="1.1" height="1.8" fill="#555"/><rect x="15.1" y="8.5" width="1.1" height="1.8" fill="#555"/></svg>
<div class="t" style="left:828px;top:820px;font-size:13.6px;font-weight:500;letter-spacing:0.9px;color:#38b8ee;-webkit-text-stroke:0.35px #38b8ee">文件管理器</div>
<div class="a" style="left:904px;top:819px;width:1px;height:15px;background:#888"></div>
<svg class="a" style="left:903px;top:812px" width="30" height="26" viewBox="0 0 30 26">
<g fill="none" stroke="#38b8ee" stroke-width="1.5" stroke-linecap="round" stroke-linejoin="round">
<rect x="6.3" y="6.5" width="4.6" height="7.6" rx="0.8"/><path d="M8.3 14.2 V21.6"/>
<path d="M12.4 6.3 H20.4 Q21.6 6.3 21.6 7.5 V15.7 Q21.6 16.9 20.4 16.9 H10.4"/><path d="M14.6 16.9 V21 M11.2 21.6 H18.6"/></g>
<path d="M7.6 8.6 H9.6 M7.6 10.8 V11.6 H9.6 V10.8" stroke="#38b8ee" stroke-width="0.9" fill="none"/></svg>
<div class="t" style="left:930.5px;top:818.5px;font-size:16.3px;font-weight:normal;letter-spacing:0px;color:#aaaaaa;-webkit-text-stroke:0.2px #aaaaaa">192.168.1.200</div>
<div class="a" style="left:1037px;top:819px;width:1px;height:15px;background:#888"></div>
<div class="t" style="left:1040.5px;top:818.5px;font-size:16.3px;font-weight:normal;letter-spacing:0px;color:#aaaaaa;-webkit-text-stroke:0.2px #aaaaaa">2012-01-01 00:13:48</div>
</body></html>
